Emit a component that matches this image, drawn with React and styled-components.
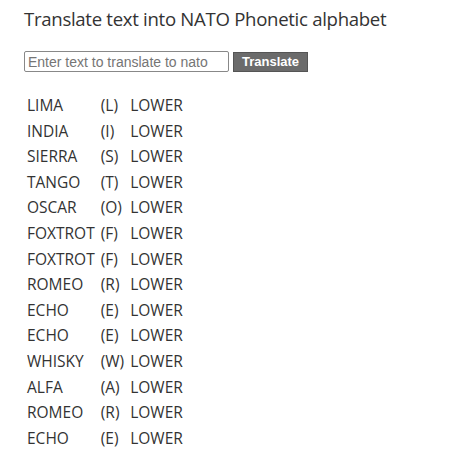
import React, { useState } from "react";
import styled, { createGlobalStyle } from "styled-components";

const GlobalStyle = createGlobalStyle`
  body {
    margin: 8px;
    font-family: "Open Sans", "Noto Sans", sans-serif;
    color: #333;
    background: #fff;
  }
`;

const NATO = {
  A: "ALFA", B: "BRAVO", C: "CHARLIE", D: "DELTA", E: "ECHO", F: "FOXTROT",
  G: "GOLF", H: "HOTEL", I: "INDIA", J: "JULIETT", K: "KILO", L: "LIMA",
  M: "MIKE", N: "NOVEMBER", O: "OSCAR", P: "PAPA", Q: "QUEBEC", R: "ROMEO",
  S: "SIERRA", T: "TANGO", U: "UNIFORM", V: "VICTOR", W: "WHISKY", X: "XRAY",
  Y: "YANKEE", Z: "ZULU",
};

const toRows = (text) =>
  text
    .split("")
    .filter((ch) => NATO[ch.toUpperCase()])
    .map((ch) => ({
      word: NATO[ch.toUpperCase()],
      letter: ch.toUpperCase(),
      kind: ch === ch.toUpperCase() ? "UPPER" : "LOWER",
    }));

const Page = styled.div`
  padding: 0 16px;
`;

const Title = styled.h1`
  margin: 0 0 21px;
  font-size: 18.6px;
  line-height: 1.2;
  letter-spacing: -0.3px;
  font-weight: 400;
  color: #333;
  white-space: nowrap;
`;

const Form = styled.form`
  display: flex;
  align-items: center;
  gap: 4px;
  margin-bottom: 20px;
`;

const Input = styled.input`
  box-sizing: border-box;
  width: 205px;
  height: 21px;
  padding: 1px 3px;
  border: 1px solid #888;
  border-radius: 2px;
  font-family: "Liberation Sans", Arial, sans-serif;
  font-size: 14px;
  color: #333;
  &::placeholder {
    color: #757575;
  }
`;

const Button = styled.button`
  box-sizing: border-box;
  height: 20px;
  padding: 0 8px;
  border: 1px solid #555;
  background: #6b6b6b;
  color: #fff;
  font-family: "Liberation Sans", Arial, sans-serif;
  font-weight: 700;
  font-size: 13px;
  cursor: pointer;
`;

const Table = styled.table`
  border-collapse: collapse;
  margin-left: 1px;
`;

const Cell = styled.td`
  padding: 0 4px 0 2px;
  height: 25.6px;
  font-size: 15.5px;
  color: #333;
  white-space: nowrap;
  vertical-align: middle;
`;

export default function App() {
  const [text, setText] = useState("");
  const [rows, setRows] = useState(() => toRows("listoffreeware"));

  const onSubmit = (e) => {
    e.preventDefault();
    setRows(toRows(text));
  };

  return (
    <>
      <GlobalStyle />
      <Page>
        <Title>Translate text into NATO Phonetic alphabet</Title>
        <Form onSubmit={onSubmit}>
          <Input
            value={text}
            onChange={(e) => setText(e.target.value)}
            placeholder="Enter text to translate to nato"
          />
          <Button type="submit">Translate</Button>
        </Form>
        <Table>
          <tbody>
            {rows.map((r, i) => (
              <tr key={i}>
                <Cell>{r.word}</Cell>
                <Cell>({r.letter})</Cell>
                <Cell>{r.kind}</Cell>
              </tr>
            ))}
          </tbody>
        </Table>
      </Page>
    </>
  );
}
